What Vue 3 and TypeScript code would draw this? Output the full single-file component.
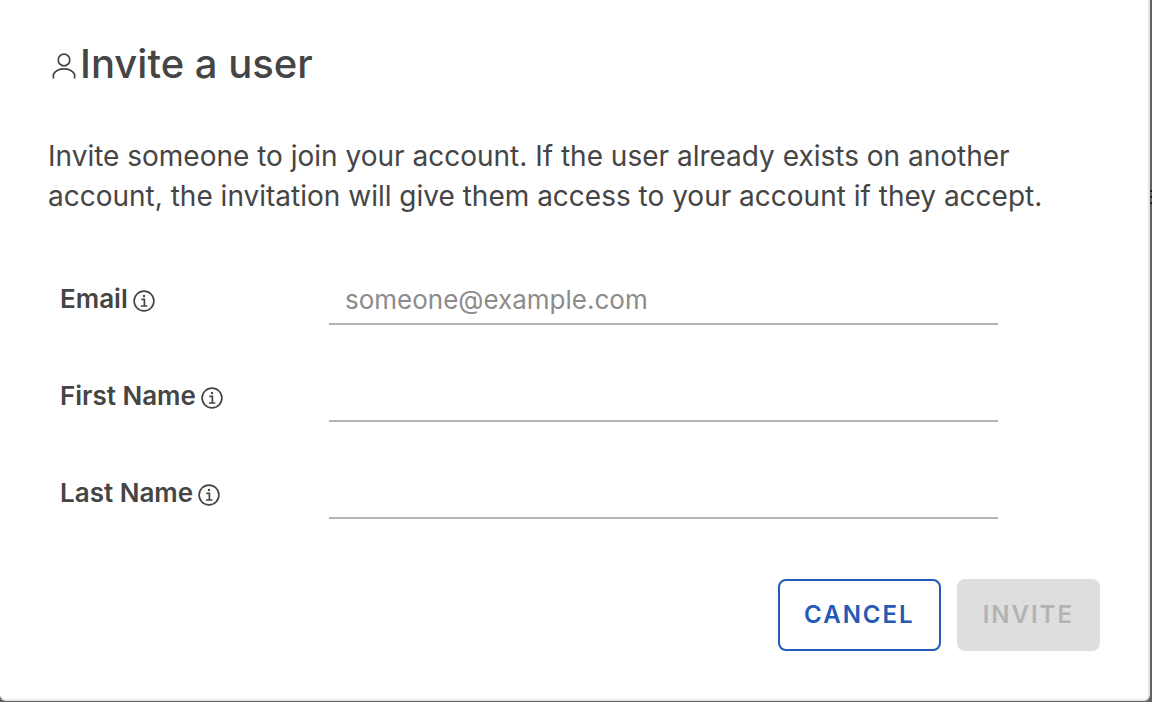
<script setup lang="ts">
import { computed, reactive } from 'vue'

interface Field {
  key: 'email' | 'firstName' | 'lastName'
  label: string
  type: string
  placeholder: string
}

const fields: Field[] = [
  { key: 'email', label: 'Email', type: 'email', placeholder: 'someone@example.com' },
  { key: 'firstName', label: 'First Name', type: 'text', placeholder: '' },
  { key: 'lastName', label: 'Last Name', type: 'text', placeholder: '' },
]

const form = reactive({ email: '', firstName: '', lastName: '' })
const complete = computed(() => Boolean(form.email && form.firstName && form.lastName))
</script>

<template>
  <div class="backdrop">
    <form class="dialog" role="dialog" aria-labelledby="invite-title" @submit.prevent>
      <h1 id="invite-title" class="title">
        <svg class="user-icon" viewBox="0 0 24 28" aria-hidden="true">
          <circle cx="12" cy="8" r="5.8" />
          <path d="M1.4 26.5v-4.2C3.6 18.7 7.4 16.9 12 16.9s8.4 1.8 10.6 5.4v4.2" />
        </svg>
        <span>Invite a user</span>
      </h1>

      <p class="intro">
        Invite someone to join your account. If the user already exists on another
        account, the invitation will give them access to your account if they accept.
      </p>

      <div class="fields">
        <div v-for="field in fields" :key="field.key" class="field">
          <div class="caption">
            <label :for="field.key">{{ field.label }}</label>
            <svg class="info-icon" viewBox="0 0 22 22" aria-hidden="true">
              <circle cx="11" cy="11" r="9.9" />
              <path d="M8.3 9.3h3.1v6.5M7.9 16h6.4" />
              <circle class="dot" cx="11" cy="6" r="1.2" />
            </svg>
          </div>
          <input
            :id="field.key"
            v-model="form[field.key]"
            :type="field.type"
            :placeholder="field.placeholder"
          />
        </div>
      </div>

      <div class="actions">
        <button type="button" class="button cancel">CANCEL</button>
        <button type="submit" class="button invite" :disabled="!complete">INVITE</button>
      </div>
    </form>
    <div class="page-marks" aria-hidden="true"><i></i><i></i><i></i></div>
  </div>
</template>

<style>
body {
  background: #626262;
}
</style>

<style scoped>
.backdrop {
  box-sizing: border-box;
  position: relative;
  min-height: 100vh;
  display: flex;
  padding: 0 2px 1px 0;
  background: #626262;
  color: #454545;
  font-family: Inter, "Liberation Sans", sans-serif;
}

.dialog {
  flex: 1;
  box-sizing: border-box;
  padding: 40px 48px 46px;
  background: #fff;
  border-right: 2px solid #e4e4e4;
  border-bottom: 2px solid #e8e8e8;
  border-radius: 0 0 6px 6px;
}

.title {
  display: flex;
  align-items: center;
  gap: 4px;
  margin: 0;
  padding-left: 4px;
  font-size: 40px;
  line-height: 48px;
  font-weight: 500;
}

.user-icon {
  flex: none;
  width: 24px;
  height: 28px;
  margin-top: 4px;
  fill: none;
  stroke: #454545;
  stroke-width: 1.7;
}

.intro {
  max-width: 1010px;
  margin: 48px 0 0;
  font-size: 28px;
  line-height: 40px;
}

.fields {
  display: grid;
  gap: 47px;
  margin: 59px 102px 0 12px;
}

.field {
  display: grid;
  grid-template-columns: 269px 1fr;
}

.caption {
  display: flex;
  align-items: center;
  gap: 5px;
  height: 48px;
  font-size: 26px;
  line-height: 32px;
  font-weight: 600;
}

.info-icon {
  width: 22px;
  height: 22px;
  margin-top: 4px;
  fill: none;
  stroke: #454545;
  stroke-width: 1.7;
}

.info-icon .dot {
  fill: #454545;
  stroke: none;
}

input {
  box-sizing: border-box;
  min-width: 0;
  width: 100%;
  height: 50px;
  padding: 0 16px;
  border: 0;
  border-bottom: 2px solid #b3b3b3;
  border-radius: 0;
  outline: 0;
  background: transparent;
  color: #454545;
  font: 26px/32px Inter, "Liberation Sans", sans-serif;
}

input::placeholder {
  color: #8c8c8c;
  opacity: 1;
}

.actions {
  display: flex;
  justify-content: flex-end;
  gap: 16px;
  margin-top: 60px;
}

.button {
  box-sizing: border-box;
  height: 72px;
  padding: 0 24px;
  border: 2px solid #2459b5;
  border-radius: 8px;
  background: #fff;
  color: #2459b5;
  font: 600 24px/32px Inter, "Liberation Sans", sans-serif;
  letter-spacing: 2px;
}

.button:disabled {
  border-color: #dedede;
  background: #dedede;
  color: #b3b3b3;
}

/* Edge of the page content that shows beside the dialog */
.page-marks {
  position: absolute;
  top: 190px;
  right: 0;
  display: grid;
  gap: 4px;
}

.page-marks i {
  width: 2px;
  height: 2px;
  background: #222;
}
</style>
